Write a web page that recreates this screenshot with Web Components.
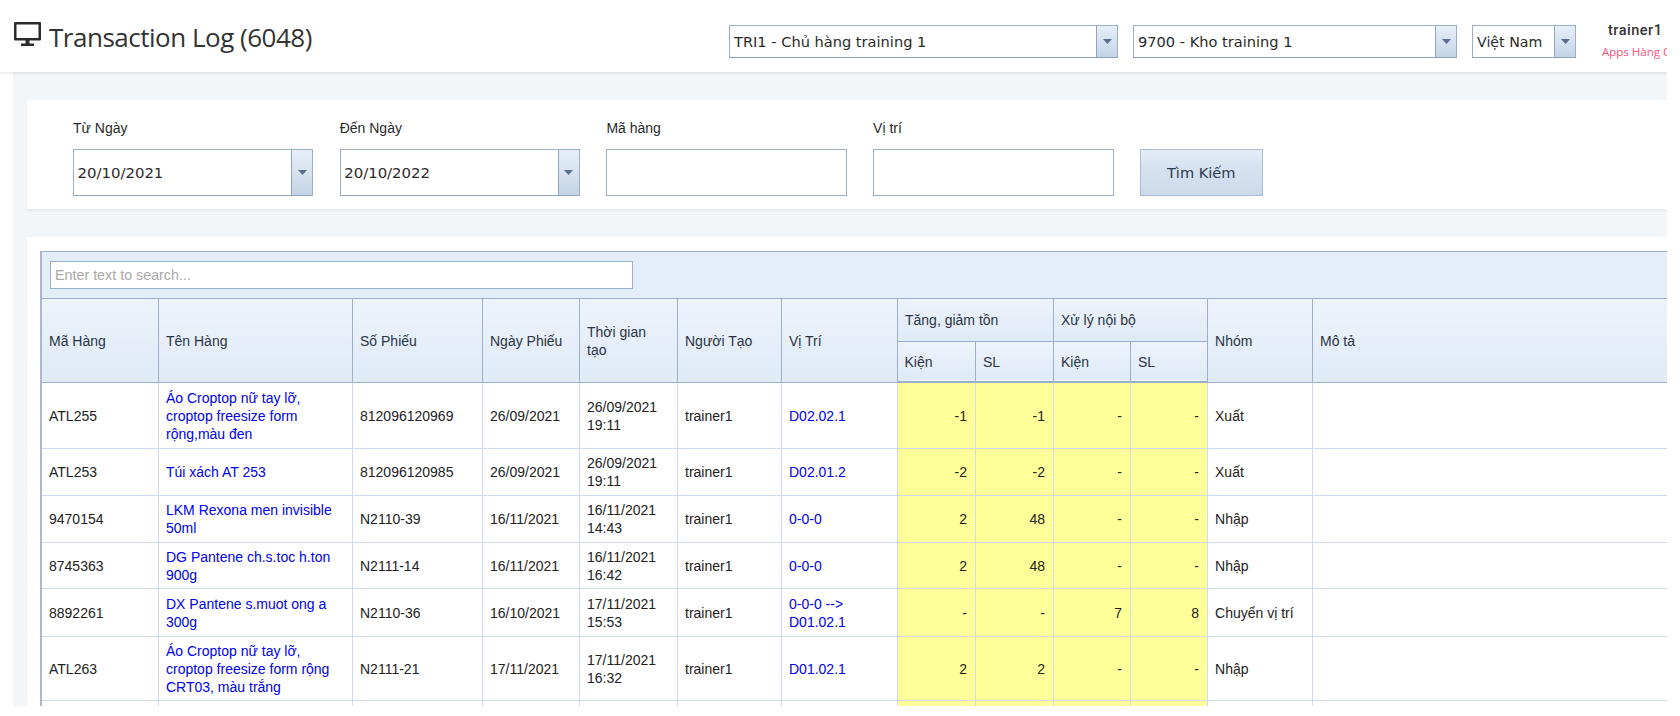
<!DOCTYPE html>
<html><head><meta charset="utf-8">
<style>
html,body{margin:0;padding:0;background:#fff;width:1680px;height:716px;overflow:hidden}
body{font-family:"Liberation Sans",Arial,sans-serif;font-size:14px;color:#222}
tx-app{display:block}
</style></head><body>
<tx-app></tx-app>
<script>
const ARROW='<svg width="9" height="5" viewBox="0 0 9 5"><path d="M0 0h9L4.500 5z" fill="#5a6d8c"/></svg>';
class TxCombo extends HTMLElement{
  connectedCallback(){
    const w=this.getAttribute('w'),h=this.getAttribute('h'),fs=this.getAttribute('fs')||14.6;
    const s=this.attachShadow({mode:'open'});
    s.innerHTML=`<style>
    :host{display:flex;box-sizing:border-box;width:${w}px;height:${h}px;border:1px solid #9db0c9;background:#fff;border-bottom-color:#8fa3bf}
    .t{flex:1;padding-left:${this.getAttribute('pad')||4}px;display:flex;align-items:center;font:${fs}px "DejaVu Sans",sans-serif;color:#2a2a2a;white-space:nowrap;overflow:hidden}
    .b{width:20px;border-left:1px solid #8ea5c0;background:linear-gradient(#e6eef8,#d6e2f0 50%,#c4d4e6);display:flex;align-items:center;justify-content:center}
    </style><div class="t"><slot></slot></div><div class="b">${ARROW}</div>`;
  }
}
customElements.define('tx-combo',TxCombo);
class TxField extends HTMLElement{
  connectedCallback(){
    const s=this.attachShadow({mode:'open'});
    const v=this.getAttribute('value');
    s.innerHTML=`<style>
    :host{display:flex;flex-direction:column;width:241px;margin-right:25.700px}
    label{font-size:14px;color:#2a2a2a;height:49px;line-height:57px;display:block;white-space:nowrap}
    .i{box-sizing:border-box;height:47px;border:1px solid #9db0c9;background:#fff}
    </style><label>${this.getAttribute('label')}</label>${v?`<tx-combo w="240" h="47" pad="3.500" fs="14.9">${v}</tx-combo>`:'<div class="i"></div>'}`;
  }
}
customElements.define('tx-field',TxField);
class TxHeader extends HTMLElement{
  connectedCallback(){
    const s=this.attachShadow({mode:'open'});
    s.innerHTML=`<style>
    :host{display:flex;height:72px;background:#fff;position:relative;z-index:1;box-shadow:0 2px 2px rgba(0,0,0,.07);overflow:hidden;clip-path:inset(0 0 -4px 0)}
    .ico{margin:22px 0 0 14px;width:27px;height:24px;flex:none}
    h1{margin:0 0 0 8px;font:400 26px/74px "Open Sans",sans-serif;letter-spacing:-.49px;color:#333;width:680px;flex:none;height:72px;white-space:nowrap}
    .sel{display:flex;margin-top:25px;height:33px}
    .u{margin-left:26px;white-space:nowrap;padding-top:22px}
    .n{font:500 14.5px/18px Roboto,sans-serif;letter-spacing:.5px;color:#333;margin-left:6px}
    .a{font:500 11.500px/16px "Open Sans",sans-serif;color:#f9507a;margin-top:4px}
    </style>
    <svg class="ico" viewBox="0 0 27 24"><path fill-rule="evenodd" fill="#2b2b2b" d="M1 0h25a1 1 0 0 1 1 1v16.500a1 1 0 0 1-1 1H15.500v3H20V24H7v-2.500h4.500v-3H1a1 1 0 0 1-1-1V1a1 1 0 0 1 1-1zM2.500 2.500V16h22V2.500z"/></svg>
    <h1><slot name="title"></slot></h1>
    <div class="sel"><slot></slot></div>
    <div class="u"><div class="n"><slot name="user"></slot></div><div class="a"><slot name="app"></slot></div></div>`;
  }
}
customElements.define('tx-header',TxHeader);
class TxCard extends HTMLElement{
  connectedCallback(){
    const s=this.attachShadow({mode:'open'});
    s.innerHTML=`<style>:host{display:block;background:#fff;box-shadow:0 2px 2px rgba(0,0,0,.05)}</style><slot></slot>`;
  }
}
customElements.define('tx-card',TxCard);
class TxFilter extends HTMLElement{
  connectedCallback(){
    const s=this.attachShadow({mode:'open'});
    s.innerHTML=`<style>
    :host{display:flex;align-items:flex-start;height:109px;padding-left:46px}
    button{margin-top:49px;width:123px;height:47px;border:1px solid #a9bdd4;background:linear-gradient(#e4edf7,#d6e2f0 40%,#cbdaea);font:14.6px "DejaVu Sans",sans-serif;color:#2c3a50;padding:0}
    </style><slot></slot><button>Tìm Kiếm</button>`;
  }
}
customElements.define('tx-filter',TxFilter);
const ROWS=[
 [66,'ATL255','Áo Croptop nữ tay lỡ,<br>croptop freesize form<br>rộng,màu đen','812096120969','26/09/2021','26/09/2021<br>19:11','trainer1','D02.02.1','-1','-1','-','-','Xuất'],
 [47,'ATL253','Túi xách AT 253','812096120985','26/09/2021','26/09/2021<br>19:11','trainer1','D02.01.2','-2','-2','-','-','Xuất'],
 [47,'9470154','LKM Rexona men invisible<br>50ml','N2110-39','16/11/2021','16/11/2021<br>14:43','trainer1','0-0-0','2','48','-','-','Nhập'],
 [46,'8745363','DG Pantene ch.s.toc h.ton<br>900g','N2111-14','16/11/2021','16/11/2021<br>16:42','trainer1','0-0-0','2','48','-','-','Nhập'],
 [48,'8892261','DX Pantene s.muot ong a<br>300g','N2110-36','16/10/2021','17/11/2021<br>15:53','trainer1','0-0-0 --&gt;<br>D01.02.1','-','-','7','8','Chuyển vị trí'],
 [64,'ATL263','Áo Croptop nữ tay lỡ,<br>croptop freesize form rộng<br>CRT03, màu trắng','N2111-21','17/11/2021','17/11/2021<br>16:32','trainer1','D01.02.1','2','2','-','-','Nhập'],
 [40,'','','','','','','','','','','','']
];
class TxGrid extends HTMLElement{
  connectedCallback(){
    const s=this.attachShadow({mode:'open'});
    const cols=[116,194,130,97,98,104,116,78,78,77,77,105,356];
    const body=ROWS.map(r=>`<tr style="height:${r[0]}px">`+r.slice(1).map((c,i)=>{
      const cl=(i==1||i==6)?'lnk':(i>=7&&i<=10)?'num':'';
      return `<td class="${cl}">${c}</td>`;}).join('')+'<td></td></tr>').join('');
    s.innerHTML=`<style>
    :host{display:block;box-sizing:border-box;margin:14px 0 0 13px;border-top:1px solid #9db0c9;border-left:2px solid #a9b9d2;height:455px;overflow:hidden;background:#e4eef8;font:14px/18px "Liberation Sans",sans-serif;color:#222}
    .bar{height:47px;box-sizing:border-box;padding:9px 0 0 8px;border-bottom:1px solid #9db0c9}
    .s{box-sizing:border-box;width:583px;height:28px;border:1px solid #9db0c9;background:#fff;color:#a9a9a9;line-height:26px;padding-left:4px;font-size:14.3px}
    table{border-collapse:collapse;table-layout:fixed;width:1625px;background:#fff}
    th{font-weight:400;text-align:left;padding:1px 7.500px 0;background:linear-gradient(#edf3fb,#dfeaf6);border:1px solid #9db0c9;border-top:0;color:#2a3444}
    th:first-child,td:first-child{border-left:0;padding-left:7px}
    td{padding:1px 7.500px 0;border:1px solid #cfdcef;border-top:0;vertical-align:middle;white-space:nowrap}
    thead tr:last-child th{border-bottom:2px solid #9db0c9}
    .top{height:42px}
    .top .g{border-bottom:1px solid #9db0c9}
    .sub{height:41px}
    .lnk{color:#0000ee}
    .num{background:#ffff99;text-align:right}
    </style>
    <div class="bar"><div class="s">Enter text to search...</div></div>
    <table><colgroup>${cols.map(c=>`<col style="width:${c}px">`).join('')}</colgroup>
    <thead><tr class="top"><th rowspan="2">Mã Hàng</th><th rowspan="2">Tên Hàng</th><th rowspan="2">Số Phiếu</th><th rowspan="2">Ngày Phiếu</th><th rowspan="2">Thời gian<br>tạo</th><th rowspan="2">Người Tạo</th><th rowspan="2">Vị Trí</th><th colspan="2" class="g">Tăng, giảm tồn</th><th colspan="2" class="g">Xử lý nội bộ</th><th rowspan="2">Nhóm</th><th rowspan="2">Mô tả</th></tr>
    <tr class="sub"><th>Kiện</th><th>SL</th><th>Kiện</th><th>SL</th></tr></thead>
    <tbody>${body}</tbody></table>`;
  }
}
customElements.define('tx-grid',TxGrid);
class TxApp extends HTMLElement{
  connectedCallback(){
    const s=this.attachShadow({mode:'open'});
    s.innerHTML=`<style>
    :host{display:block;width:1667px;height:706px;overflow:hidden;position:relative}
    .main{margin-left:13px;height:634px;background:#f3f6f8;padding:28px 0 0 14px;box-sizing:border-box}
    .c2{margin-top:28px;height:480px;overflow:hidden;display:block}
    </style>
    <tx-header>
      <span slot="title">Transaction Log (6048)</span>
      <tx-combo w="389" h="33" style="margin-right:15px">TRI1 - Chủ hàng training 1</tx-combo>
      <tx-combo w="324" h="33" style="margin-right:15px">9700 - Kho training 1</tx-combo>
      <tx-combo w="104" h="33" fs="14.2">Việt Nam</tx-combo>
      <span slot="user">trainer1</span>
      <span slot="app">Apps Hàng Chủ</span>
    </tx-header>
    <div class="main">
      <tx-card><tx-filter>
        <tx-field label="Từ Ngày" value="20/10/2021"></tx-field>
        <tx-field label="Đến Ngày" value="20/10/2022"></tx-field>
        <tx-field label="Mã hàng"></tx-field>
        <tx-field label="Vị trí"></tx-field>
      </tx-filter></tx-card>
      <tx-card class="c2"><tx-grid></tx-grid></tx-card>
    </div>`;
  }
}
customElements.define('tx-app',TxApp);
</script></body></html>
